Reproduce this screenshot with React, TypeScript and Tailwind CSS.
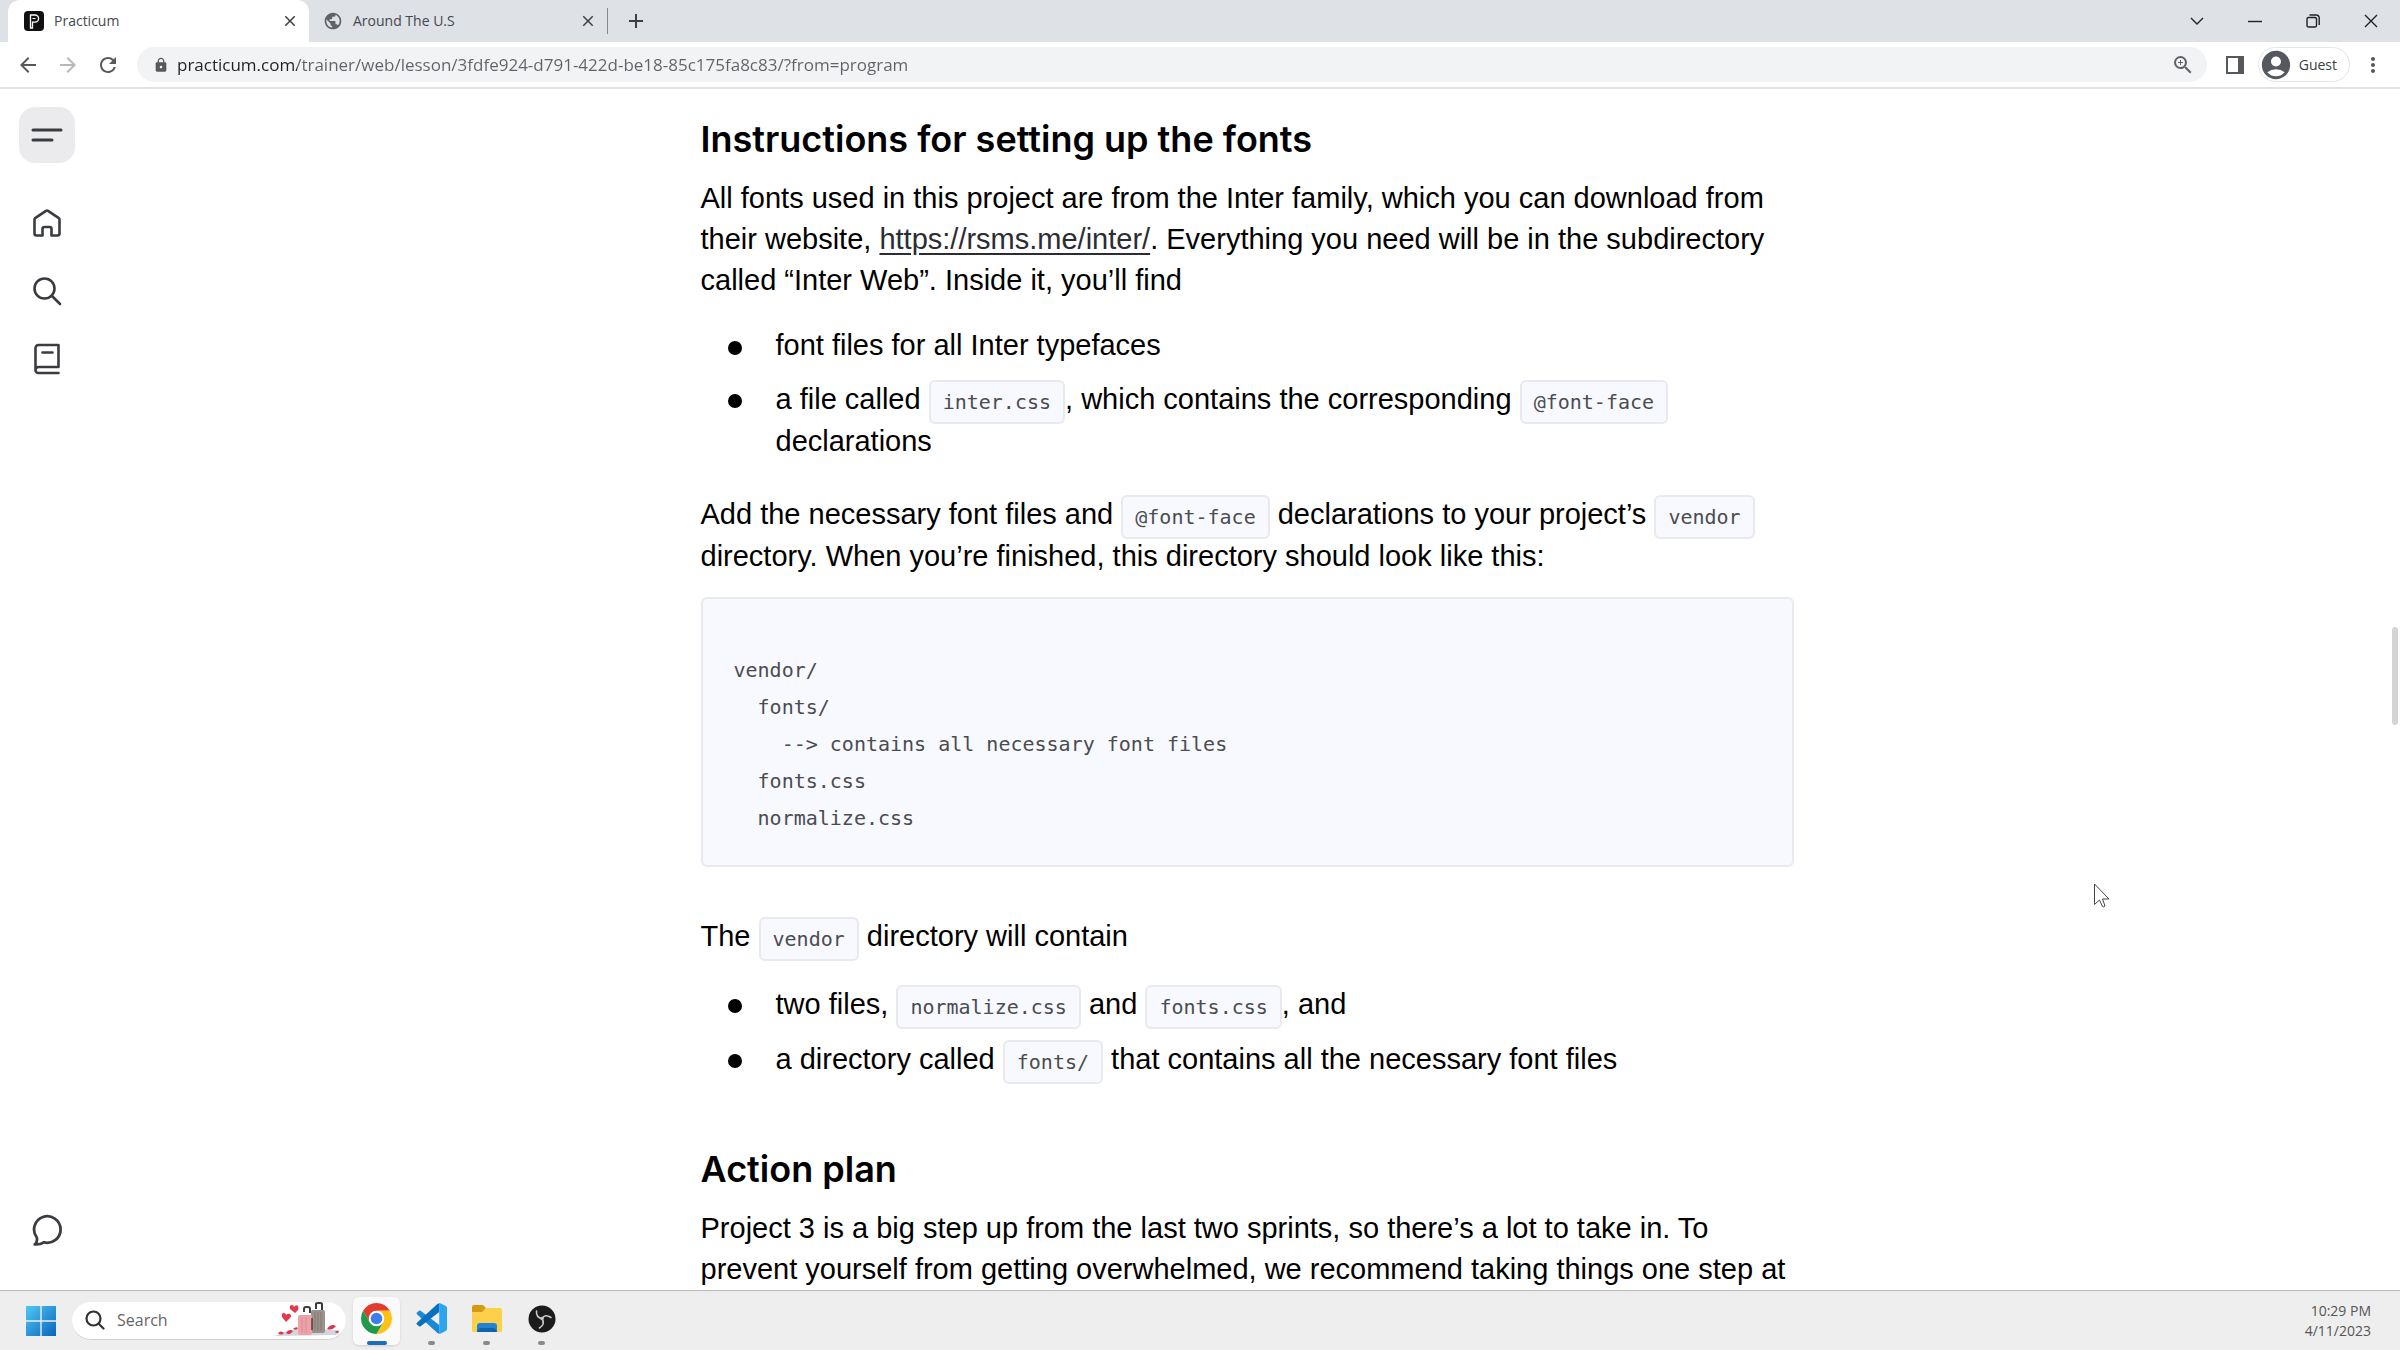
import React, { useState } from 'react';
import {
  MdPublic,
  MdClose,
  MdAdd,
  MdLock,
  MdArrowBack,
  MdArrowForward,
  MdRefresh,
  MdZoomIn,
  MdAccountCircle,
  MdMoreVert,
} from 'react-icons/md';

interface TabProps {
  title: string;
  icon: React.ReactNode;
  active?: boolean;
}

// --- Browser chrome ---

const PracticumIcon = () => (
  <svg viewBox="0 0 20 20" className="h-5 w-5">
    <rect width="20" height="20" rx="4" fill="#111" />
    <path d="M6.5 17V4h4.5a3.6 3.6 0 0 1 0 7.2H8.5V17z" fill="none" stroke="#fff" strokeWidth="1.3" />
    <path d="M8.5 7.5h3" stroke="#fff" strokeWidth="1" />
  </svg>
);

const Tab: React.FC<TabProps> = ({ title, icon, active }) => (
  <div
    className={`flex h-[42px] items-center gap-[10px] pr-[10px] ${
      active ? 'w-[301px] rounded-t-xl bg-white pl-4' : 'w-[298px] pl-[14px]'
    }`}
  >
    {icon}
    <button type="button" className="flex-1 text-left text-sm text-[#45484c]">
      {title}
    </button>
    <button type="button" aria-label={`Close ${title}`} className="text-[#3c4043]">
      <MdClose className="h-[18px] w-[18px]" />
    </button>
  </div>
);

const TabStrip = () => (
  <header className="flex h-[42px] shrink-0 items-center bg-[#dee1e6] pl-2">
    <Tab title="Practicum" icon={<PracticumIcon />} active />
    <Tab title="Around The U.S" icon={<MdPublic className="h-5 w-5 text-[#5f6368]" />} />
    <div className="h-[26px] w-px bg-[#85898e]" />
    <button type="button" aria-label="New tab" className="ml-4 text-[#3c4043]">
      <MdAdd className="h-6 w-6" />
    </button>
    <div className="ml-auto flex h-9 items-center text-[#222]">
      <button type="button" aria-label="Search tabs" className="flex w-[58px] justify-center">
        <svg viewBox="0 0 14 14" className="h-[14px] w-[14px]" fill="none" stroke="currentColor" strokeWidth="1.4">
          <path d="M1 4l6 6 6-6" />
        </svg>
      </button>
      <button type="button" aria-label="Minimize" className="flex w-[58px] justify-center">
        <svg viewBox="0 0 14 14" className="h-[14px] w-[14px]" fill="none" stroke="currentColor" strokeWidth="1.4">
          <path d="M0 7.5h14" />
        </svg>
      </button>
      <button type="button" aria-label="Restore" className="flex w-[58px] justify-center">
        <svg viewBox="0 0 14 14" className="h-[14px] w-[14px]" fill="none" stroke="currentColor" strokeWidth="1.4">
          <rect x="1" y="3.5" width="9.5" height="9.5" rx="1.6" />
          <path d="M3.5 1h6.5a3.2 3.2 0 0 1 3.2 3.2V11" />
        </svg>
      </button>
      <button type="button" aria-label="Close window" className="flex w-[58px] justify-center">
        <svg viewBox="0 0 14 14" className="h-[14px] w-[14px]" fill="none" stroke="currentColor" strokeWidth="1.4">
          <path d="M1 1l12 12M13 1L1 13" />
        </svg>
      </button>
    </div>
  </header>
);

const Toolbar = () => {
  const [url, setUrl] = useState(
    'practicum.com/trainer/web/lesson/3fdfe924-d791-422d-be18-85c175fa8c83/?from=program'
  );

  return (
    <div className="flex h-[47px] shrink-0 items-center border-b-2 border-[#e0e2e4] bg-white pl-4">
      <nav className="flex w-[121px] gap-4 text-[#55585c]">
        <button type="button" aria-label="Back">
          <MdArrowBack className="h-6 w-6" />
        </button>
        <button type="button" aria-label="Forward" className="text-[#b6b8bb]">
          <MdArrowForward className="h-6 w-6" />
        </button>
        <button type="button" aria-label="Reload">
          <MdRefresh className="h-6 w-6" />
        </button>
      </nav>
      <div className="flex h-[35px] flex-1 items-center rounded-full bg-[#f1f3f4] px-3">
        <MdLock className="h-4 w-6 text-[#55585c]" />
        {/* Host part is darker than the path */}
        <input
          aria-label="Address"
          value={url}
          onChange={(e) => setUrl(e.target.value)}
          className="ml-1 flex-1 bg-linear-to-r from-[#202124] from-[120px] to-[#5f6368] to-[120px] bg-clip-text text-[17px] text-transparent outline-none"
        />
        <button type="button" aria-label="Zoom" className="text-[#5f6368]">
          <MdZoomIn className="h-6 w-6" />
        </button>
      </div>
      <button type="button" aria-label="Side panel" className="ml-[19px]">
        <svg viewBox="0 0 18 18" className="h-[18px] w-[18px]">
          <rect x="1" y="1" width="16" height="16" fill="none" stroke="#55585c" strokeWidth="2" />
          <path d="M12 1h5v16h-5z" fill="#55585c" />
        </svg>
      </button>
      <button
        type="button"
        className="ml-[14px] flex h-[35px] items-center gap-[6px] rounded-full border border-[#e4e6e8] pr-3 text-sm text-[#3c4043]"
      >
        <MdAccountCircle className="h-[34px] w-[34px] text-[#55585c]" />
        Guest
      </button>
      <button type="button" aria-label="Menu" className="ml-[11px] mr-[15px] text-[#55585c]">
        <MdMoreVert className="h-6 w-6" />
      </button>
    </div>
  );
};

// --- Lesson page ---

const NAV_ICONS = [
  { label: 'Home', d: 'M1.500 10.500q0-1 1-1.700L13 1.800q1-.6 2 0l10.500 7q1 .7 1 1.700V24.500a2 2 0 0 1-2 2H18.500v-6.500a2 2 0 0 0-2-2h-5a2 2 0 0 0-2 2v6.500H3.500a2 2 0 0 1-2-2z' },
  { label: 'Search', d: 'M21.5 11.5a10 10 0 1 1-20 0 10 10 0 0 1 20 0zM19 19l8 8' },
  { label: 'Lessons', d: 'M25.500 22V0H5.500A3 3 0 0 0 2.500 3v22A3 3 0 0 0 5.500 28H25.500M2.500 25a3 3 0 0 1 3-3h20M9.500 7.500h10' },
];

const SideNav = () => (
  <nav className="flex w-[94px] shrink-0 flex-col items-start pb-11 pl-[19px] pt-[18px] text-[#3a3c40]">
    <button type="button" aria-label="Open menu" className="mb-[26px] flex h-14 w-14 items-center justify-center rounded-2xl bg-[#ebebed]">
      <svg viewBox="0 0 32 16" className="h-4 w-8" fill="none" stroke="currentColor" strokeWidth="3" strokeLinecap="round">
        <path d="M2 3h28M2 13h19" />
      </svg>
    </button>
    {NAV_ICONS.map((item) => (
      <button key={item.label} type="button" aria-label={item.label} className="flex h-[68px] w-14 items-center justify-center">
        <svg viewBox="0 0 28 28" className="h-7 w-7 overflow-visible" fill="none" stroke="currentColor" strokeWidth="2.6" strokeLinecap="round" strokeLinejoin="round">
          <path d={item.d} />
        </svg>
      </button>
    ))}
    <button type="button" aria-label="Chat" className="mt-auto flex w-14 justify-center">
      <svg viewBox="0 0 30 30" className="h-8 w-8" fill="none" stroke="currentColor" strokeWidth="2.6" strokeLinejoin="round">
        <path d="M3.500 28.500c2-2 2.500-4.500 1.900-6.500A12.400 12.400 0 1 1 12 26.500c-2 1.500-5 2.200-8.500 2z" />
      </svg>
    </button>
  </nav>
);

const Code = ({ children }: { children: string }) => (
  <code className="rounded-md border-2 border-[#e9eaf0] bg-[#f8f9fe] px-3 py-2 font-['DejaVu_Sans_Mono',monospace] text-xl text-[#4a4c50]">
    {children}
  </code>
);

const DIRECTORY = `vendor/
  fonts/
    --> contains all necessary font files
  fonts.css
  normalize.css`;

const BULLET_ITEM = "flex gap-[34px] before:mt-4 before:h-[14px] before:w-[14px] before:shrink-0 before:rounded-full before:bg-black before:content-['']";
const HEADING = "font-['Inter',sans-serif] text-4xl font-semibold leading-[52px]";

const Lesson = () => (
  <main className="min-w-0 flex-1 overflow-hidden">
    <article className="mx-auto max-w-[1093px] pt-6 font-['Liberation_Sans',sans-serif] text-[29px] leading-[41px] text-black">
      <h2 className={HEADING}>Instructions for setting up the fonts</h2>
      <p className="mt-[13px]">
        All fonts used in this project are from the Inter family, which you can download from their website,{' '}
        <a href="https://rsms.me/inter/" className="text-[#2b2d33] underline underline-offset-4">
          https://rsms.me/inter/
        </a>
        . Everything you need will be in the subdirectory called “Inter Web”. Inside it, you’ll find
      </p>
      <ul className="mt-6 space-y-3 pl-[27px]">
        <li className={BULLET_ITEM}>
          <span>font files for all Inter typefaces</span>
        </li>
        <li className={`${BULLET_ITEM} leading-[42px]`}>
          <span>
            a file called <Code>inter.css</Code>, which contains the corresponding <Code>@font-face</Code> declarations
          </span>
        </li>
      </ul>
      <p className="mt-[31px] leading-[42px]">
        Add the necessary font files and <Code>@font-face</Code> declarations to your project’s <Code>vendor</Code>{' '}
        directory. When you’re finished, this directory should look like this:
      </p>
      <pre className="mt-5 rounded-md border-2 border-[#e9eaf0] bg-[#f8f9fe] px-[31px] pb-7 pt-[53px] font-['DejaVu_Sans_Mono',monospace] text-xl leading-[37px] text-[#4a4c50]">
        {DIRECTORY}
      </pre>
      <p className="mt-12 leading-[42px]">
        The <Code>vendor</Code> directory will contain
      </p>
      <ul className="mt-[26px] space-y-[13px] pl-[27px] leading-[42px]">
        <li className={BULLET_ITEM}>
          <span>
            two files, <Code>normalize.css</Code> and <Code>fonts.css</Code>, and
          </span>
        </li>
        <li className={BULLET_ITEM}>
          <span>
            a directory called <Code>fonts/</Code> that contains all the necessary font files
          </span>
        </li>
      </ul>
      <h2 className={`${HEADING} mt-[63px]`}>Action plan</h2>
      <p className="mt-[13px]">
        Project 3 is a big step up from the last two sprints, so there’s a lot to take in. To prevent yourself from
        getting overwhelmed, we recommend taking things one step at
      </p>
    </article>
  </main>
);

// --- Taskbar ---

const StartIcon = () => (
  <svg viewBox="0 0 30 30" className="h-[30px] w-[30px]">
    <defs>
      <linearGradient id="start" x1="0" y1="0" x2="1" y2="1">
        <stop offset="0" stopColor="#4fc8f8" />
        <stop offset="1" stopColor="#0a64b8" />
      </linearGradient>
    </defs>
    <path d="M0 0h14.300v14.300H0zM15.700 0H30v14.300H15.700zM0 15.700h14.300V30H0zM15.700 15.700H30V30H15.700z" fill="url(#start)" />
  </svg>
);

const SuitcaseArt = () => (
  <svg viewBox="0 0 66 36" className="h-9 w-[66px]">
    <path d="M0 34q12-7 30-7t34 1q2 3-3 5z" fill="#d3d5de" />
    <g fill="none" stroke="#3b3b3f" strokeWidth="2">
      <path d="M29 10V7q0-2 2-2h2q2 0 2 2v4M41 7V2q0-1 2-1h2q2 0 2 1v6" />
    </g>
    <rect x="36" y="8" width="14" height="23" rx="2" fill="#9a928b" />
    <path d="M40 10v19M43 10v19M46 10v19" stroke="#837b75" />
    <rect x="23" y="13" width="14" height="20" rx="2" fill="#eba3a8" />
    <path d="M27 15v16M31 15v16" stroke="#d88b91" />
    <path d="M37 16v12" stroke="#5c3a3c" strokeWidth="1.500" />
    <path d="M11 20l-4-5q-1-4 2-4 2 0 2 2 2-2 4-1 2 2 0 4zM20 11l-5-4q-1-4 2-4 2 0 2 2 2-3 4-1 1 2 0 4z" fill="#e23a4c" />
    <path d="M3 31q3-3 6 0-3 3-6 0zM11 31q3-5 7-2-3 5-7 2zM52 27q4-6 9-3-4 5-9 3zM18 27q3-3 5-1-1 3-5 1zM60 30q2-2 4 0-2 2-4 0z" fill="#dc3545" />
  </svg>
);

const ChromeIcon = () => (
  <svg viewBox="0 0 48 48" className="h-[31px] w-[31px]">
    <circle cx="24" cy="24" r="24" fill="#fff" />
    <path d="M3.220 12A24 24 0 0 1 44.780 12H24a12 12 0 0 0-10.390 18z" fill="#e33b2e" />
    <path d="M44.780 12A24 24 0 0 1 24 48l10.390-18A12 12 0 0 0 24 12z" fill="#fbc116" />
    <path d="M24 48A24 24 0 0 1 3.220 12l10.390 18a12 12 0 0 0 20.780 0z" fill="#1e9a4a" />
    <circle cx="24" cy="24" r="11.500" fill="#fff" />
    <circle cx="24" cy="24" r="9" fill="#3b7ded" />
  </svg>
);

const VSCodeIcon = () => (
  <svg viewBox="0 0 100 100" className="h-[31px] w-[31px]">
    <path d="M3 36q-3-3 0-5l7-6q2-2 5 0l60 46v27q-3 1-6-1z" fill="#1a8ad6" />
    <path d="M3 64q-3 3 0 5l7 6q2 2 5 0l60-46V2q-3-1-6 1z" fill="#0a6fbd" />
    <path d="M72 1q3-1 6 0l18 9q4 2 4 6v68q0 4-4 6l-18 9q-3 1-6 0 3-2 3-6V7q0-4-3-6z" fill="#2ba3ee" />
  </svg>
);

const FolderIcon = () => (
  <svg viewBox="0 0 32 30" className="h-[30px] w-8">
    <path d="M1 3q0-2 2-2h9l3 3-3 4H1z" fill="#d39b12" />
    <path d="M1 8h10l4-4h14q2 0 2 2v21q0 1-1 1H2q-1 0-1-1z" fill="#fcd04b" />
    <path d="M6 28v-6q0-3 3-3h14q3 0 3 3v6z" fill="#1f84d6" />
    <path d="M6 28q1-4 4-4h12q3 0 4 4z" fill="#1163ad" />
  </svg>
);

const ObsIcon = () => (
  <svg viewBox="0 0 28 28" className="h-7 w-7">
    <circle cx="14" cy="14" r="13.500" fill="#1c1b1c" />
    <g fill="none" stroke="#c9c9c9" strokeWidth="1.600" strokeLinecap="round">
      <path d="M14 13.500Q8 12.500 8.500 6" />
      <path d="M14 13.500Q17 8.500 23 12.500" />
      <path d="M14 13.500Q17.500 19 11.500 23" />
    </g>
    <circle cx="14" cy="13.500" r="1.800" fill="#c9c9c9" />
  </svg>
);

const APPS = [
  { name: 'Google Chrome', Icon: ChromeIcon, active: true },
  { name: 'Visual Studio Code', Icon: VSCodeIcon, active: false },
  { name: 'File Explorer', Icon: FolderIcon, active: false },
  { name: 'OBS Studio', Icon: ObsIcon, active: false },
];

const Taskbar = () => (
  <footer className="flex h-[60px] shrink-0 items-center border-t border-[#b9bcba] bg-[#eeeeee] pl-[26px] pr-[29px]">
    <button type="button" aria-label="Start">
      <StartIcon />
    </button>
    <label className="ml-4 flex h-[38px] w-[274px] items-center rounded-full border-b border-[#cfcfcf] bg-white pl-[13px]">
      <svg viewBox="0 0 20 20" className="h-5 w-5 shrink-0" fill="none" stroke="#333" strokeWidth="2.2" strokeLinecap="round">
        <circle cx="8.500" cy="8.500" r="7" />
        <path d="M13.500 13.500l5 5" />
      </svg>
      <input
        aria-label="Search"
        placeholder="Search"
        className="ml-3 w-[158px] text-base outline-none placeholder:text-[#666]"
      />
      <SuitcaseArt />
    </label>
    <div className="ml-[7px] flex gap-2">
      {APPS.map(({ name, Icon, active }) => (
        <button
          key={name}
          type="button"
          aria-label={name}
          className={`flex h-12 w-[47px] flex-col items-center rounded-md ${active ? 'bg-[#fafafa] shadow-sm' : ''}`}
        >
          <span className="flex h-11 items-center">
            <Icon />
          </span>
          <span className={`h-1 rounded-full ${active ? 'w-5 bg-[#1a6fb8]' : 'w-[7px] bg-[#8a8a8a]'}`} />
        </button>
      ))}
    </div>
    <div className="ml-auto text-right text-sm leading-5 text-[#555]">
      <div>10:29 PM</div>
      <div>4/11/2023</div>
    </div>
  </footer>
);

export default function App() {
  return (
    <div className="relative flex h-screen flex-col overflow-hidden bg-white font-['Open_Sans',sans-serif]">
      <TabStrip />
      <Toolbar />
      <div className="relative flex min-h-0 flex-1">
        <SideNav />
        <Lesson />
        {/* Scrollbar thumb */}
        <div className="absolute right-[2px] top-[538px] h-[98px] w-[6px] rounded-full bg-[#d4d4d4]" />
      </div>
      <Taskbar />
      {/* Mouse pointer */}
      <svg viewBox="0 0 16 25" className="absolute left-[2094px] top-[883px] h-[25px] w-4" fill="#fff" stroke="#444" strokeWidth="1">
        <path d="M.500 1v20.500l5-4.500 3 6.500q1 1 2.500-.500l-2.500-7h6.500z" />
      </svg>
    </div>
  );
}
